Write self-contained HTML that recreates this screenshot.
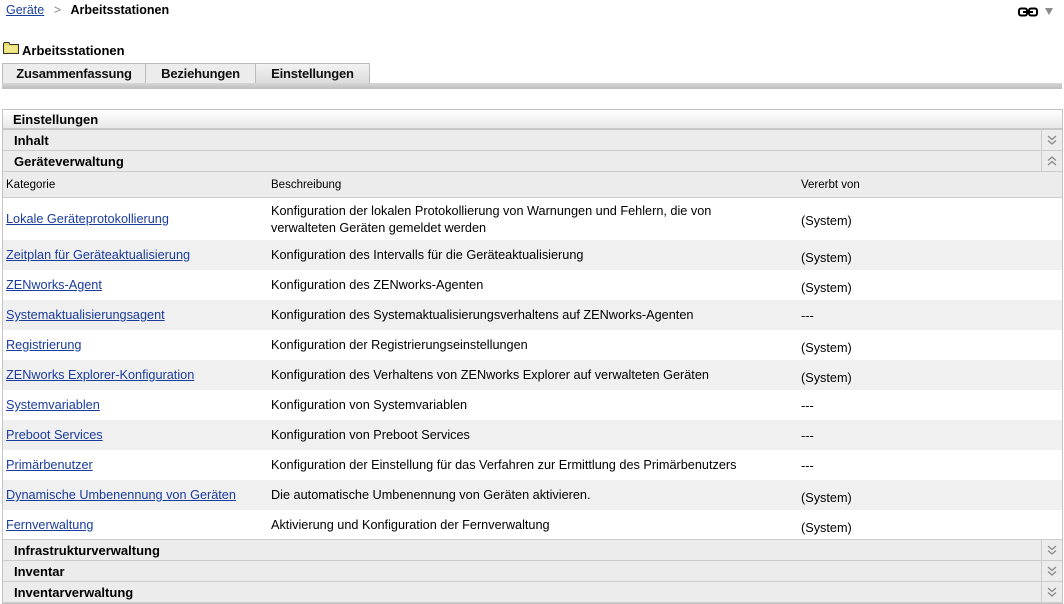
<!DOCTYPE html>
<html><head><meta charset="utf-8"><style>
*{margin:0;padding:0;box-sizing:border-box}
body{width:1064px;height:604px;overflow:hidden;background:#fff;font-family:"Liberation Sans","DejaVu Sans",sans-serif;font-size:12px;color:#000;position:relative}
a{color:#1a3c9c;text-decoration:underline}
.abs{position:absolute}
.tabs{position:absolute;left:2px;top:63px;height:20px;display:flex}
.tab{border:1px solid #bbb;border-bottom:none;background:#ececec;font-size:13px;font-weight:bold;padding-top:2px;text-align:center;height:20px;color:#111;margin-right:-1px;letter-spacing:-0.2px}
.tab.act{background:linear-gradient(#f2f2f2,#dcdcdc)}
.tabline{position:absolute;left:2px;top:83px;width:1060px;height:6px;background:linear-gradient(#d6d6d6,#bdbdbd)}
.box{position:absolute;left:2px;top:109px;width:1061px;height:495px;border:1px solid #c4c4c4}
.title{height:20px;background:linear-gradient(#fff,#e8e8e8);border-bottom:2px solid #c8c8c8;font-size:13px;font-weight:bold;padding:2px 0 0 10px}
.sec{height:21px;background:#ececec;border-bottom:1px solid #ccc;font-size:13px;font-weight:bold;padding:3px 0 0 11px;position:relative}
.sec .ic{position:absolute;right:0;top:0;width:21px;height:20px;border-left:1px solid #ccc}
.sec .ic svg{position:absolute;left:5px;top:5px}
.hdr{height:26px;background:#ececec;border-bottom:1px solid #ccc;position:relative;font-size:11.5px}
.row{position:relative;height:30px;font-size:12.7px}
.row.g{background:#f0f0f0}
.c1{position:absolute;left:3px}.c2{position:absolute;left:268px}.c3{position:absolute;left:798px}
</style></head><body>
<div class="abs" style="left:6px;top:3px;font-size:12.5px"><a href="#">Geräte</a> <span style="color:#888;margin:0 6px">&gt;</span> <b>Arbeitsstationen</b></div>
<svg class="abs" style="left:1018px;top:7px" width="20" height="10" viewBox="0 0 20 10"><rect x="1" y="1.5" width="8" height="7" rx="2" fill="none" stroke="#000" stroke-width="2"/><rect x="11" y="1.5" width="8" height="7" rx="2" fill="none" stroke="#000" stroke-width="2"/><line x1="5" y1="5" x2="15" y2="5" stroke="#000" stroke-width="2"/></svg>
<svg class="abs" style="left:1045px;top:8px" width="8" height="7"><polygon points="0,0 8,0 4,7" fill="#8a8a8a"/></svg>
<svg class="abs" style="left:3px;top:41px" width="16" height="13"><path d="M0.5 2.5 V12.5 H15.5 V3.5 H7 L6 1.5 H1.5 Z" fill="#e9dc6a" stroke="#333"/><rect x="2" y="5" width="12" height="6" fill="#f0e68a"/></svg>
<div class="abs" style="left:22px;top:43px;font-size:13px;font-weight:bold">Arbeitsstationen</div>
<div class="tabs"><div class="tab" style="width:144px">Zusammenfassung</div><div class="tab" style="width:111px">Beziehungen</div><div class="tab act" style="width:115px">Einstellungen</div></div>
<div class="tabline"></div>
<div class="box">
<div class="title">Einstellungen</div>
<div class="sec">Inhalt<div class="ic"><svg width="10" height="10"><path d="M1 1 L5 4.5 L9 1 M1 5.5 L5 9 L9 5.5" fill="none" stroke="#888" stroke-width="1.3"/></svg></div></div>
<div class="sec">Geräteverwaltung<div class="ic"><svg width="10" height="10"><path d="M1 4.5 L5 1 L9 4.5 M1 9 L5 5.5 L9 9" fill="none" stroke="#888" stroke-width="1.3"/></svg></div></div>
<div class="hdr"><span class="c1" style="top:7px">Kategorie</span><span class="c2" style="top:7px">Beschreibung</span><span class="c3" style="top:7px">Vererbt von</span></div>
<div class="row" style="height:42px"><a class="c1" style="top:14px" href="#">Lokale Geräteprotokollierung</a><span class="c2" style="top:5px;line-height:17px">Konfiguration der lokalen Protokollierung von Warnungen und Fehlern, die von<br>verwalteten Geräten gemeldet werden</span><span class="c3" style="top:16px">(System)</span></div>
<div class="row g"><a class="c1" style="top:8px" href="#">Zeitplan für Geräteaktualisierung</a><span class="c2" style="top:8px">Konfiguration des Intervalls für die Geräteaktualisierung</span><span class="c3" style="top:11px">(System)</span></div>
<div class="row"><a class="c1" style="top:8px" href="#">ZENworks-Agent</a><span class="c2" style="top:8px">Konfiguration des ZENworks-Agenten</span><span class="c3" style="top:11px">(System)</span></div>
<div class="row g"><a class="c1" style="top:8px" href="#">Systemaktualisierungsagent</a><span class="c2" style="top:8px">Konfiguration des Systemaktualisierungsverhaltens auf ZENworks-Agenten</span><span class="c3" style="top:9px">---</span></div>
<div class="row"><a class="c1" style="top:8px" href="#">Registrierung</a><span class="c2" style="top:8px">Konfiguration der Registrierungseinstellungen</span><span class="c3" style="top:11px">(System)</span></div>
<div class="row g"><a class="c1" style="top:8px" href="#">ZENworks Explorer-Konfiguration</a><span class="c2" style="top:8px">Konfiguration des Verhaltens von ZENworks Explorer auf verwalteten Geräten</span><span class="c3" style="top:11px">(System)</span></div>
<div class="row"><a class="c1" style="top:8px" href="#">Systemvariablen</a><span class="c2" style="top:8px">Konfiguration von Systemvariablen</span><span class="c3" style="top:9px">---</span></div>
<div class="row g"><a class="c1" style="top:8px" href="#">Preboot Services</a><span class="c2" style="top:8px">Konfiguration von Preboot Services</span><span class="c3" style="top:9px">---</span></div>
<div class="row"><a class="c1" style="top:8px" href="#">Primärbenutzer</a><span class="c2" style="top:8px">Konfiguration der Einstellung für das Verfahren zur Ermittlung des Primärbenutzers</span><span class="c3" style="top:9px">---</span></div>
<div class="row g"><a class="c1" style="top:8px" href="#">Dynamische Umbenennung von Geräten</a><span class="c2" style="top:8px">Die automatische Umbenennung von Geräten aktivieren.</span><span class="c3" style="top:11px">(System)</span></div>
<div class="row" style="border-bottom:1px solid #ccc"><a class="c1" style="top:8px" href="#">Fernverwaltung</a><span class="c2" style="top:8px">Aktivierung und Konfiguration der Fernverwaltung</span><span class="c3" style="top:11px">(System)</span></div>
<div class="sec">Infrastrukturverwaltung<div class="ic"><svg width="10" height="10"><path d="M1 1 L5 4.5 L9 1 M1 5.5 L5 9 L9 5.5" fill="none" stroke="#888" stroke-width="1.3"/></svg></div></div>
<div class="sec">Inventar<div class="ic"><svg width="10" height="10"><path d="M1 1 L5 4.5 L9 1 M1 5.5 L5 9 L9 5.5" fill="none" stroke="#888" stroke-width="1.3"/></svg></div></div>
<div class="sec">Inventarverwaltung<div class="ic"><svg width="10" height="10"><path d="M1 1 L5 4.5 L9 1 M1 5.5 L5 9 L9 5.5" fill="none" stroke="#888" stroke-width="1.3"/></svg></div></div>
</div>
</body></html>
